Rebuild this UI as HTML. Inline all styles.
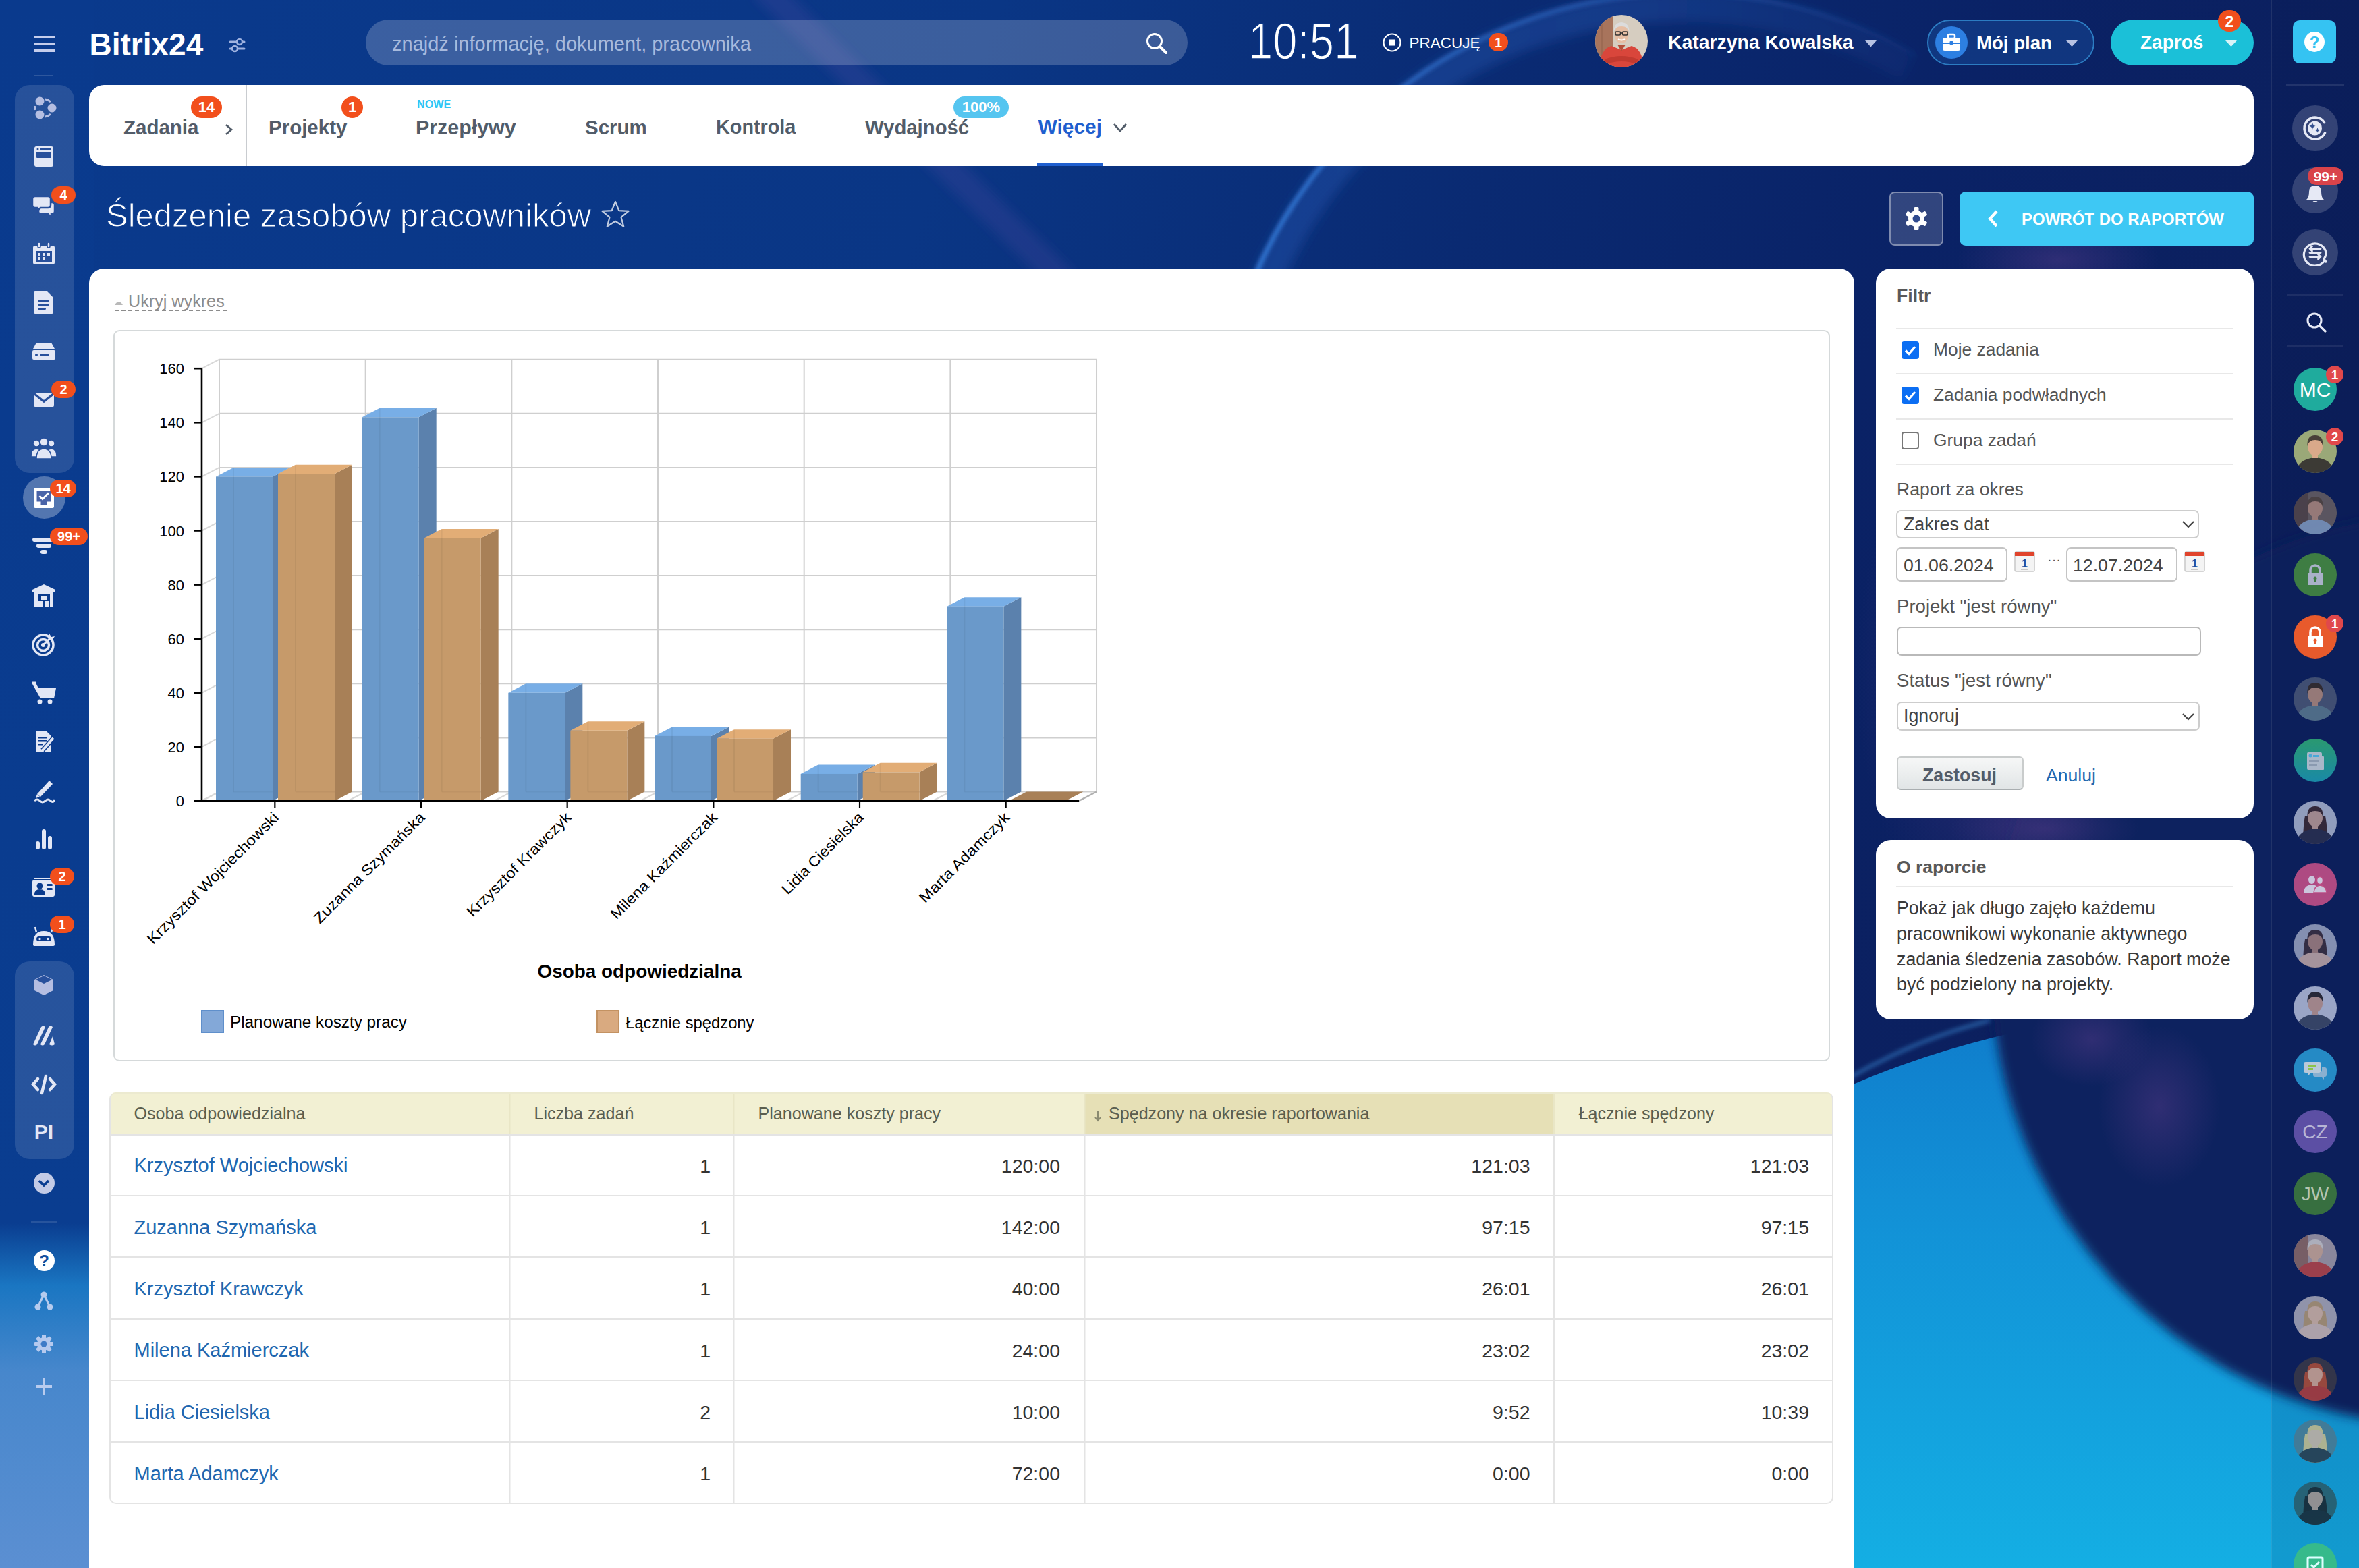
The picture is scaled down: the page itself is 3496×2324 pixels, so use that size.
<!DOCTYPE html>
<html><head><meta charset="utf-8">
<style>
*{box-sizing:border-box;margin:0;padding:0}
html,body{width:3496px;height:2324px;overflow:hidden}
body{position:relative;font-family:"Liberation Sans",sans-serif;background:#0a3488}
svg text{font-family:"Liberation Sans",sans-serif}
.a{position:absolute}
.t{position:absolute;white-space:nowrap;line-height:1}
</style></head>
<body>
<svg class="a" style="left:0;top:0" width="3496" height="2324" viewBox="0 0 3496 2324">
  <defs>
    <linearGradient id="bgbase" x1="0" y1="0" x2="1" y2="0.25">
      <stop offset="0" stop-color="#0a3a8d"/>
      <stop offset="0.4" stop-color="#0a3685"/>
      <stop offset="0.62" stop-color="#0a2a72"/>
      <stop offset="0.8" stop-color="#0a2266"/>
      <stop offset="1" stop-color="#0c1f5c"/>
    </linearGradient>
    <linearGradient id="leftcol" x1="0" y1="0" x2="0" y2="1">
      <stop offset="0" stop-color="#0a3a8d"/>
      <stop offset="0.78" stop-color="#0a3d90"/>
      <stop offset="0.82" stop-color="#1a76c2"/>
      <stop offset="0.875" stop-color="#4787cc"/>
      <stop offset="1" stop-color="#5b8fd2"/>
    </linearGradient>
    <linearGradient id="cyan" x1="0" y1="0" x2="0" y2="1">
      <stop offset="0" stop-color="#0f7ccb"/>
      <stop offset="0.1" stop-color="#1290d6"/>
      <stop offset="0.3" stop-color="#14b0e4"/>
      <stop offset="1" stop-color="#17bfec"/>
    </linearGradient>
    <radialGradient id="purp" cx="0.5" cy="0.5" r="0.5">
      <stop offset="0" stop-color="#5a3c8c" stop-opacity="0.45"/>
      <stop offset="1" stop-color="#5a3c8c" stop-opacity="0"/>
    </radialGradient>
    <radialGradient id="darkc" cx="0.5" cy="0.5" r="0.5">
      <stop offset="0" stop-color="#0b1f62"/>
      <stop offset="0.9" stop-color="#0b2368"/>
      <stop offset="0.97" stop-color="#0d3a86"/>
      <stop offset="1" stop-color="#0f4f9e"/>
    </radialGradient>
    <radialGradient id="hdrarc" cx="0.5" cy="0.5" r="0.5">
      <stop offset="0.9" stop-color="#2a66c0" stop-opacity="0"/>
      <stop offset="0.975" stop-color="#2a66c0" stop-opacity="0.35"/>
      <stop offset="1" stop-color="#3a7ad8" stop-opacity="0.7"/>
    </radialGradient>
    <filter id="blur8"><feGaussianBlur stdDeviation="8"/></filter>
    <filter id="blur3"><feGaussianBlur stdDeviation="3"/></filter>
  </defs>
  <rect width="3496" height="2324" fill="url(#bgbase)"/>
  <rect width="140" height="2324" fill="url(#leftcol)"/>
  <linearGradient id="arcg" gradientUnits="userSpaceOnUse" x1="1850" y1="0" x2="2900" y2="0"><stop offset="0" stop-color="#3a86e6" stop-opacity="0.95"/><stop offset="0.45" stop-color="#3a7ad8" stop-opacity="0.55"/><stop offset="1" stop-color="#3a7ad8" stop-opacity="0"/></linearGradient>
  <linearGradient id="arcg2" gradientUnits="userSpaceOnUse" x1="1800" y1="0" x2="3000" y2="0"><stop offset="0" stop-color="#2a62c0" stop-opacity="0.35"/><stop offset="0.5" stop-color="#2a62c0" stop-opacity="0.3"/><stop offset="1" stop-color="#2a62c0" stop-opacity="0"/></linearGradient>
  <path d="M1847.8 505.8 A669 669 0 0 1 2828.5 99.6" stroke="url(#arcg2)" stroke-width="44" fill="none" filter="url(#blur8)"/>
  <path d="M1828.5 500.7 A689 689 0 0 1 2838.5 82.3" stroke="url(#arcg)" stroke-width="6" fill="none" filter="url(#blur3)"/>
  <path d="M1130 -20 L1580 420" stroke="#5a4aa8" stroke-opacity="0.22" stroke-width="40" filter="url(#blur8)"/>
  <circle cx="3300" cy="2920" r="1425" fill="url(#cyan)"/>
  <path d="M2740 1598 Q2840 1540 2950 1512" stroke="#3b8fd8" stroke-opacity="0.6" stroke-width="5" fill="none" filter="url(#blur3)"/>
  <circle cx="3627" cy="1438" r="676" fill="#0b205f" filter="url(#blur8)"/>
  <ellipse cx="2950" cy="1000" rx="200" ry="380" fill="url(#purp)"/>
  <ellipse cx="3050" cy="385" rx="150" ry="60" fill="url(#purp)"/>
  <ellipse cx="3030" cy="1228" rx="140" ry="50" fill="url(#purp)"/>
  <ellipse cx="3200" cy="1640" rx="90" ry="120" fill="url(#purp)"/>
  <ellipse cx="3100" cy="1540" rx="90" ry="70" fill="url(#purp)"/>
</svg>

<div class="a" style="left:3365px;top:0px;width:131px;height:2324px;background:rgba(6,16,64,0.12)"></div>
<div class="a" style="left:3365px;top:0px;width:2px;height:2324px;background:rgba(255,255,255,0.09)"></div>
<div class="a" style="left:3389px;top:436px;width:84px;height:2px;background:rgba(255,255,255,0.08)"></div>
<div class="a" style="left:3389px;top:512px;width:84px;height:2px;background:rgba(255,255,255,0.08)"></div>
<div class="a" style="left:3397px;top:156px;width:68px;height:68px;background:rgba(255,255,255,0.17);border-radius:50%"></div>
<div class="a" style="left:3397px;top:248px;width:68px;height:68px;background:rgba(255,255,255,0.17);border-radius:50%"></div>
<div class="a" style="left:3397px;top:340px;width:68px;height:68px;background:rgba(255,255,255,0.17);border-radius:50%"></div>
<svg class="a" style="left:3411.0px;top:170.0px;opacity:1" width="40" height="40" viewBox="0 0 40 40"><path d="M33.5 11.5 A16 16 0 1 0 34.5 27" stroke="#e6e9f5" stroke-width="3.6" fill="none" stroke-linecap="round"/><circle cx="19.5" cy="20" r="10.5" fill="#e6e9f5"/><path d="M16 11.5 q0.9 4.6 4.6 5.2 q-3.7 0.8 -4.6 5.4 q-0.9 -4.6 -4.6 -5.4 q3.7 -0.6 4.6 -5.2z" fill="#34508f"/><path d="M23.5 19.5 q0.6 3 3 3.5 q-2.4 0.5 -3 3.6 q-0.6 -3.1 -3 -3.6 q2.4 -0.5 3 -3.5z" fill="#34508f"/></svg>
<svg class="a" style="left:3411.0px;top:262.0px;opacity:1" width="40" height="40" viewBox="0 0 40 40"><path d="M7 34 q4 -3 4 -12 q0 -9 9 -9 q9 0 9 9 q0 9 4 12z" fill="#e6e9f5"/><path d="M16.5 36 h7 q-3.5 4 -7 0z" fill="#e6e9f5"/></svg>
<svg class="a" style="left:3411.0px;top:354.0px;opacity:1" width="40" height="40" viewBox="0 0 40 40"><path d="M34 32 A16.5 16.5 0 1 1 36 20 A16 16 0 0 1 33 30 L36 34z" stroke="#e6e9f5" stroke-width="3.2" fill="none" stroke-linejoin="round"/><g stroke="#e6e9f5" stroke-width="2.8" fill="none" stroke-linecap="round"><path d="M12 14.5 h16 M12 14.5 l3.5 -3.5 M12 14.5 l3.5 3.5"/><path d="M12 20.5 h16"/><path d="M28 26.5 h-16 M28 26.5 l-3.5 -3.5 M28 26.5 l-3.5 3.5"/></g></svg>
<div class="a" style="left:3420px;top:248px;width:53px;height:26px;background:#d9434a;border-radius:13.0px"></div>
<div class="t" style="left:3146.5px;width:600px;text-align:center;top:250.8px;font-size:21px;font-weight:bold;color:#fff;">99+</div>
<svg class="a" style="left:3413.0px;top:458.0px;opacity:1" width="40" height="40" viewBox="0 0 40 40"><circle cx="17" cy="17" r="10" stroke="#e6e9f5" stroke-width="3" fill="none"/><path d="M24 24 L34 34" stroke="#e6e9f5" stroke-width="3.5"/></svg>

<div class="a" style="left:3399px;top:545px;width:64px;height:64px;background:#1fab9d;border-radius:50%;opacity:1.0"></div>
<div class="t" style="left:3131.0px;width:600px;text-align:center;top:562.6px;font-size:30px;color:#fff;">MC</div>
<svg class="a" style="left:3399px;top:636.7px;opacity:1.0" width="64" height="64" viewBox="0 0 64 64"><defs><clipPath id="ca1"><circle cx="32" cy="32" r="32"/></clipPath></defs><g clip-path="url(#ca1)"><rect width="64" height="64" fill="#9aa878"/><path d="M4 64 q1 -20 28 -23 q27 3 28 23z" fill="#3c3a35"/><rect x="28" y="34" width="8" height="8" fill="#d9a98a"/><ellipse cx="32" cy="25" rx="11" ry="13.5" fill="#d9a98a"/><path d="M20.5 24 q-1 -16 11.5 -16 q12.5 0 11.5 16 q-2 -9 -11.5 -9 q-9.5 0 -11.5 9z" fill="#4a4038"/></g></svg>
<svg class="a" style="left:3399px;top:728.4px;opacity:0.8" width="64" height="64" viewBox="0 0 64 64"><defs><clipPath id="ca2"><circle cx="32" cy="32" r="32"/></clipPath></defs><g clip-path="url(#ca2)"><rect width="64" height="64" fill="#6e6462"/><rect width="22" height="64" fill="#5a4a48"/><path d="M4 64 q1 -20 28 -23 q27 3 28 23z" fill="#8aa4c8"/><rect x="28" y="34" width="8" height="8" fill="#b89080"/><ellipse cx="32" cy="25" rx="11" ry="13.5" fill="#b89080"/><path d="M20.5 24 q-1 -16 11.5 -16 q12.5 0 11.5 16 q-2 -9 -11.5 -9 q-9.5 0 -11.5 9z" fill="#5a4a40"/></g></svg>
<div class="a" style="left:3399px;top:820px;width:64px;height:64px;background:#3e7d43;border-radius:50%;opacity:1.0"></div>
<svg class="a" style="left:3411.0px;top:832.1px;opacity:1" width="40" height="40" viewBox="0 0 40 40"><path d="M13 18 v-5 a7 7 0 0 1 14 0 v5" stroke="#a9b1c9" stroke-width="3.5" fill="none"/><rect x="9" y="18" width="22" height="17" fill="#a9b1c9"/><circle cx="20" cy="25" r="2.5" fill="#3e7d43"/><rect x="19" y="26" width="2" height="5" fill="#3e7d43"/></svg>
<div class="a" style="left:3399px;top:912px;width:64px;height:64px;background:#e85a2c;border-radius:50%;opacity:1.0"></div>
<svg class="a" style="left:3411.0px;top:923.8px;opacity:1" width="40" height="40" viewBox="0 0 40 40"><path d="M13 18 v-5 a7 7 0 0 1 14 0 v5" stroke="#fff" stroke-width="3.5" fill="none"/><rect x="9" y="18" width="22" height="17" fill="#fff"/><circle cx="20" cy="25" r="2.5" fill="#e85a2c"/><rect x="19" y="26" width="2" height="5" fill="#e85a2c"/></svg>
<svg class="a" style="left:3399px;top:1003.5px;opacity:0.8" width="64" height="64" viewBox="0 0 64 64"><defs><clipPath id="ca5"><circle cx="32" cy="32" r="32"/></clipPath></defs><g clip-path="url(#ca5)"><rect width="64" height="64" fill="#4e5a78"/><path d="M4 64 q1 -20 28 -23 q27 3 28 23z" fill="#5f7f92"/><rect x="28" y="34" width="8" height="8" fill="#b89080"/><ellipse cx="32" cy="25" rx="11" ry="13.5" fill="#b89080"/><path d="M20.5 24 q-1 -16 11.5 -16 q12.5 0 11.5 16 q-2 -9 -11.5 -9 q-9.5 0 -11.5 9z" fill="#3a2e28"/></g></svg>
<div class="a" style="left:3399px;top:1095px;width:64px;height:64px;border-radius:50%;background:linear-gradient(#2fae74,#1c9cb4);opacity:0.85"></div>
<svg class="a" style="left:3411.0px;top:1107.2px;opacity:1" width="40" height="40" viewBox="0 0 40 40"><rect x="8" y="8" width="22" height="26" rx="2" fill="#a9b7c9"/><rect x="28" y="14" width="5" height="20" rx="1" fill="#a9b7c9"/><circle cx="13" cy="13" r="2.5" fill="#4aa8d8"/><rect x="17" y="12" width="9" height="3" fill="#4aa8d8"/><rect x="11" y="20" width="15" height="2.5" fill="#8a9ab0"/><rect x="11" y="26" width="12" height="2.5" fill="#8a9ab0"/></svg>
<svg class="a" style="left:3399px;top:1186.9px;opacity:0.85" width="64" height="64" viewBox="0 0 64 64"><defs><clipPath id="ca7"><circle cx="32" cy="32" r="32"/></clipPath></defs><g clip-path="url(#ca7)"><rect width="64" height="64" fill="#a9b3cf"/><path d="M17 22 q-5 26 0 42 h30 q5 -16 0 -42z" fill="#3a2a35"/><path d="M4 64 q1 -20 28 -23 q27 3 28 23z" fill="#2a3050"/><rect x="28" y="34" width="8" height="8" fill="#b89a98"/><ellipse cx="32" cy="25" rx="11" ry="13.5" fill="#b89a98"/><path d="M20.5 24 q-1 -16 11.5 -16 q12.5 0 11.5 16 q-2 -9 -11.5 -9 q-9.5 0 -11.5 9z" fill="#3a2a35"/></g></svg>
<div class="a" style="left:3399px;top:1279px;width:64px;height:64px;background:#c04f86;border-radius:50%;opacity:0.9"></div>
<svg class="a" style="left:3411.0px;top:1290.6px;opacity:1" width="40" height="40" viewBox="0 0 40 40"><g fill="#cbc6dc"><ellipse cx="15" cy="13" rx="5" ry="6"/><path d="M3 33 q0 -12 12 -13 q12 1 12 13z"/><ellipse cx="27" cy="14" rx="4.5" ry="5.5" stroke="#c04f86" stroke-width="1.5"/><path d="M18 32 q1 -10 9 -11 q9 1 10 11z" stroke="#c04f86" stroke-width="1.5"/></g></svg>
<svg class="a" style="left:3399px;top:1370.3000000000002px;opacity:0.85" width="64" height="64" viewBox="0 0 64 64"><defs><clipPath id="ca9"><circle cx="32" cy="32" r="32"/></clipPath></defs><g clip-path="url(#ca9)"><rect width="64" height="64" fill="#9aa3c0"/><path d="M17 22 q-5 26 0 42 h30 q5 -16 0 -42z" fill="#3a3040"/><path d="M4 64 q1 -20 28 -23 q27 3 28 23z" fill="#c0a8a8"/><rect x="28" y="34" width="8" height="8" fill="#a08080"/><ellipse cx="32" cy="25" rx="11" ry="13.5" fill="#a08080"/><path d="M20.5 24 q-1 -16 11.5 -16 q12.5 0 11.5 16 q-2 -9 -11.5 -9 q-9.5 0 -11.5 9z" fill="#3a3040"/></g></svg>
<svg class="a" style="left:3399px;top:1462.0px;opacity:0.9" width="64" height="64" viewBox="0 0 64 64"><defs><clipPath id="ca10"><circle cx="32" cy="32" r="32"/></clipPath></defs><g clip-path="url(#ca10)"><rect width="64" height="64" fill="#aab4d2"/><path d="M4 64 q1 -20 28 -23 q27 3 28 23z" fill="#3a4868"/><rect x="28" y="34" width="8" height="8" fill="#b09090"/><ellipse cx="32" cy="25" rx="11" ry="13.5" fill="#b09090"/><path d="M20.5 24 q-1 -16 11.5 -16 q12.5 0 11.5 16 q-2 -9 -11.5 -9 q-9.5 0 -11.5 9z" fill="#2a2a35"/></g></svg>
<div class="a" style="left:3399px;top:1554px;width:64px;height:64px;background:#2a9ed8;border-radius:50%;opacity:0.85"></div>
<svg class="a" style="left:3411.0px;top:1565.7px;opacity:1" width="40" height="40" viewBox="0 0 40 40"><path d="M6 8 h20 a3 3 0 0 1 3 3 v10 a3 3 0 0 1 -3 3 h-12 l-5 5 v-5 h-3 a3 3 0 0 1 -3 -3 v-10 a3 3 0 0 1 3 -3z" fill="#b9c9d9"/><path d="M30 16 h4 a3 3 0 0 1 3 3 v8 a3 3 0 0 1 -3 3 h-1 v4 l-4 -4 h-9 a3 3 0 0 1 -3 -3 v-2 h8 a5 5 0 0 0 5 -5z" fill="#8ab0d0"/><rect x="9" y="12" width="12" height="3" fill="#8bc34a"/><rect x="9" y="17" width="8" height="3" fill="#8bc34a"/></svg>
<div class="a" style="left:3399px;top:1645px;width:64px;height:64px;background:#6b58b2;border-radius:50%;opacity:0.85"></div>
<div class="t" style="left:3131.0px;width:600px;text-align:center;top:1664.2px;font-size:28px;color:#b8b5d5;">CZ</div>
<div class="a" style="left:3399px;top:1737px;width:64px;height:64px;background:#3f7e3c;border-radius:50%;opacity:0.85"></div>
<div class="t" style="left:3131.0px;width:600px;text-align:center;top:1755.9px;font-size:28px;color:#b5c5b2;">JW</div>
<svg class="a" style="left:3399px;top:1828.8px;opacity:0.85" width="64" height="64" viewBox="0 0 64 64"><defs><clipPath id="ca14"><circle cx="32" cy="32" r="32"/></clipPath></defs><g clip-path="url(#ca14)"><rect width="64" height="64" fill="#a09aa8"/><rect width="22" height="64" fill="#8a6a68"/><path d="M4 64 q1 -20 28 -23 q27 3 28 23z" fill="#b5454a"/><rect x="28" y="34" width="8" height="8" fill="#c9a89a"/><ellipse cx="32" cy="25" rx="11" ry="13.5" fill="#c9a89a"/><path d="M20.5 24 q-1 -16 11.5 -16 q12.5 0 11.5 16 q-2 -9 -11.5 -9 q-9.5 0 -11.5 9z" fill="#c8c8cc"/></g></svg>
<svg class="a" style="left:3399px;top:1920.5px;opacity:0.85" width="64" height="64" viewBox="0 0 64 64"><defs><clipPath id="ca15"><circle cx="32" cy="32" r="32"/></clipPath></defs><g clip-path="url(#ca15)"><rect width="64" height="64" fill="#a8a8b8"/><path d="M17 22 q-5 26 0 42 h30 q5 -16 0 -42z" fill="#b09878"/><path d="M4 64 q1 -20 28 -23 q27 3 28 23z" fill="#c8b8b8"/><rect x="28" y="34" width="8" height="8" fill="#d0b5a8"/><ellipse cx="32" cy="25" rx="11" ry="13.5" fill="#d0b5a8"/><path d="M20.5 24 q-1 -16 11.5 -16 q12.5 0 11.5 16 q-2 -9 -11.5 -9 q-9.5 0 -11.5 9z" fill="#b09878"/></g></svg>
<svg class="a" style="left:3399px;top:2012.2px;opacity:0.85" width="64" height="64" viewBox="0 0 64 64"><defs><clipPath id="ca16"><circle cx="32" cy="32" r="32"/></clipPath></defs><g clip-path="url(#ca16)"><rect width="64" height="64" fill="#3a3a48"/><path d="M17 22 q-5 26 0 42 h30 q5 -16 0 -42z" fill="#b0503a"/><path d="M4 64 q1 -20 28 -23 q27 3 28 23z" fill="#b04040"/><rect x="28" y="34" width="8" height="8" fill="#d0a898"/><ellipse cx="32" cy="25" rx="11" ry="13.5" fill="#d0a898"/><path d="M20.5 24 q-1 -16 11.5 -16 q12.5 0 11.5 16 q-2 -9 -11.5 -9 q-9.5 0 -11.5 9z" fill="#b0503a"/></g></svg>
<svg class="a" style="left:3399px;top:2103.9px;opacity:0.85" width="64" height="64" viewBox="0 0 64 64"><defs><clipPath id="ca17"><circle cx="32" cy="32" r="32"/></clipPath></defs><g clip-path="url(#ca17)"><rect width="64" height="64" fill="#4a7890"/><path d="M17 22 q-5 26 0 42 h30 q5 -16 0 -42z" fill="#c8b888"/><path d="M4 64 q1 -20 28 -23 q27 3 28 23z" fill="#2a3848"/><rect x="28" y="34" width="8" height="8" fill="#c8b0a0"/><ellipse cx="32" cy="25" rx="11" ry="13.5" fill="#c8b0a0"/><path d="M20.5 24 q-1 -16 11.5 -16 q12.5 0 11.5 16 q-2 -9 -11.5 -9 q-9.5 0 -11.5 9z" fill="#c8b888"/></g></svg>
<svg class="a" style="left:3399px;top:2195.6000000000004px;opacity:0.85" width="64" height="64" viewBox="0 0 64 64"><defs><clipPath id="ca18"><circle cx="32" cy="32" r="32"/></clipPath></defs><g clip-path="url(#ca18)"><rect width="64" height="64" fill="#2a5a68"/><path d="M17 22 q-5 26 0 42 h30 q5 -16 0 -42z" fill="#1a2028"/><path d="M4 64 q1 -20 28 -23 q27 3 28 23z" fill="#1a2530"/><rect x="28" y="34" width="8" height="8" fill="#a89088"/><ellipse cx="32" cy="25" rx="11" ry="13.5" fill="#a89088"/><path d="M20.5 24 q-1 -16 11.5 -16 q12.5 0 11.5 16 q-2 -9 -11.5 -9 q-9.5 0 -11.5 9z" fill="#1a2028"/></g></svg>
<div class="a" style="left:3399px;top:2287px;width:64px;height:64px;background:#3dbf7f;border-radius:50%;opacity:0.85"></div>
<svg class="a" style="left:3411.0px;top:2299.3px;opacity:1" width="40" height="40" viewBox="0 0 40 40"><rect x="9" y="9" width="22" height="22" rx="2" stroke="#dff" stroke-width="3" fill="none"/><path d="M14 20 l4 4 l8 -8" stroke="#dff" stroke-width="3" fill="none"/></svg>
<div class="a" style="left:3447px;top:542px;width:26px;height:26px;background:#e0484b;border-radius:13.0px"></div>
<div class="t" style="left:3160.0px;width:600px;text-align:center;top:545.8px;font-size:19px;font-weight:bold;color:#fff;">1</div>
<div class="a" style="left:3447px;top:634px;width:26px;height:26px;background:#e0484b;border-radius:13.0px"></div>
<div class="t" style="left:3160.0px;width:600px;text-align:center;top:637.8px;font-size:19px;font-weight:bold;color:#fff;">2</div>
<div class="a" style="left:3447px;top:911px;width:26px;height:26px;background:#e0484b;border-radius:13.0px"></div>
<div class="t" style="left:3160.0px;width:600px;text-align:center;top:914.8px;font-size:19px;font-weight:bold;color:#fff;">1</div>

<div class="a" style="left:50px;top:53px;width:32px;height:4px;background:#c5cdec;border-radius:1px"></div>
<div class="a" style="left:50px;top:63px;width:32px;height:4px;background:#c5cdec;border-radius:1px"></div>
<div class="a" style="left:50px;top:73px;width:32px;height:4px;background:#c5cdec;border-radius:1px"></div>
<div class="a" style="left:50px;top:111px;width:28px;height:2px;background:rgba(255,255,255,0.15)"></div>
<div class="t" style="left:132.5px;top:42.5px;font-size:46px;font-weight:bold;color:#fff;">Bitrix24</div>
<svg class="a" style="left:338px;top:54px" width="28" height="26" viewBox="0 0 28 26">
<g stroke="#9fb2e0" stroke-width="3" fill="none" stroke-linecap="round">
<line x1="3" y1="8" x2="24" y2="8"/><line x1="3" y1="18" x2="24" y2="18"/></g>
<circle cx="17" cy="8" r="4" fill="#0a3a8d" stroke="#9fb2e0" stroke-width="2.5"/>
<circle cx="10" cy="18" r="4" fill="#0a3a8d" stroke="#9fb2e0" stroke-width="2.5"/></svg>
<div class="a" style="left:542px;top:29px;width:1218px;height:68px;background:rgba(255,255,255,0.2);border-radius:34px"></div>
<div class="t" style="left:581.0px;top:51.0px;font-size:29px;color:rgba(210,222,245,0.72);">znajdź informację, dokument, pracownika</div>
<svg class="a" style="left:1696px;top:46px" width="40" height="38" viewBox="0 0 40 38">
<circle cx="15" cy="15" r="10.5" stroke="#fff" stroke-width="3" fill="none"/>
<line x1="23" y1="23" x2="32" y2="32" stroke="#fff" stroke-width="4" stroke-linecap="round"/></svg>
<div class="t" style="left:1850.0px;top:23.3px;font-size:76px;color:#fff;transform:scaleX(0.858);transform-origin:0 0;-webkit-text-stroke:1.6px #0a3585">10:51</div>
<svg class="a" style="left:2048px;top:48px" width="30" height="30" viewBox="0 0 30 30">
<circle cx="15" cy="15" r="12.5" stroke="#fff" stroke-width="2.2" fill="none"/>
<rect x="10.5" y="10.5" width="9" height="9" fill="#fff"/></svg>
<div class="t" style="left:2088.5px;top:53.2px;font-size:22.5px;color:#fff;">PRACUJĘ</div>
<div class="a" style="left:2206px;top:49px;width:29px;height:27px;background:#f24f1c;border-radius:13.5px"></div>
<div class="t" style="left:1920.5px;width:600px;text-align:center;top:52.8px;font-size:20px;font-weight:bold;color:#fff;">1</div>
<svg class="a" style="left:2364px;top:22px" width="78" height="78" viewBox="0 0 78 78">
<defs><clipPath id="avc"><circle cx="39" cy="39" r="39"/></clipPath></defs>
<g clip-path="url(#avc)"><rect width="78" height="78" fill="#d6cdc0"/><rect width="26" height="78" fill="#a8745c"/><rect x="8" y="0" width="3" height="78" fill="#8f604a" opacity="0.5"/>
<path d="M6 78 Q8 50 24 46 L39 52 L54 46 Q70 50 72 78 Z" fill="#d9463b"/>
<path d="M14 66 Q39 56 64 66 L64 74 Q39 64 14 74Z" fill="#c23a30"/>
<path d="M33 44 L39 54 L45 44z" fill="#b5503a"/>
<ellipse cx="39" cy="29" rx="10.5" ry="13" fill="#e6bea4"/>
<path d="M27.5 26 Q27 12 39 11 Q51 12 50.5 26 Q49 17 39 17 Q29 17 27.5 26Z" fill="#dcdcdc"/>
<g stroke="#333" stroke-width="1.6" fill="none"><rect x="30" y="25" width="7.5" height="5" rx="1.5"/><rect x="40.5" y="25" width="7.5" height="5" rx="1.5"/><path d="M37.5 27 h3"/></g>
<path d="M34 36 q5 3 10 0" stroke="#fff" stroke-width="1.8" fill="none"/>
</g></svg>
<div class="t" style="left:2472.0px;top:47.7px;font-size:28.4px;font-weight:bold;color:#fff;">Katarzyna Kowalska</div>
<svg class="a" style="left:2764px;top:60px" width="17" height="10" viewBox="0 0 17 10"><path d="M0 0 L17 0 L8.5 9.5Z" fill="#b8c3e3"/></svg>
<div class="a" style="left:2856px;top:29px;width:248px;height:68px;border:2px solid #2c7cc2;background:rgba(24,80,160,0.45);border-radius:34px"></div>
<div class="a" style="left:2868px;top:39px;width:48px;height:48px;background:#2d7fe2;border-radius:50%"></div>
<svg class="a" style="left:2877px;top:48px" width="30" height="30" viewBox="0 0 30 30">
<rect x="10" y="3" width="10" height="6" rx="2" stroke="#fff" stroke-width="2.5" fill="none"/>
<rect x="2" y="8" width="26" height="19" rx="3" fill="#fff"/>
<rect x="2" y="15" width="26" height="2" fill="#2d7fe2"/><rect x="12.5" y="13" width="5" height="5" rx="1" fill="#2d7fe2"/></svg>
<div class="t" style="left:2929.0px;top:49.5px;font-size:27.6px;font-weight:bold;color:#fff;">Mój plan</div>
<svg class="a" style="left:3062px;top:60px" width="17" height="10" viewBox="0 0 17 10"><path d="M0 0 L17 0 L8.5 9Z" fill="#b8c3e3"/></svg>
<div class="a" style="left:3128px;top:29px;width:212px;height:68px;background:#1bc0d8;border-radius:34px"></div>
<div class="t" style="left:3172.0px;top:49.2px;font-size:28px;font-weight:bold;color:#fff;">Zaproś</div>
<svg class="a" style="left:3298px;top:60px" width="17" height="10" viewBox="0 0 17 10"><path d="M0 0 L17 0 L8.5 9Z" fill="#d8f4f8"/></svg>
<div class="a" style="left:3287px;top:15px;width:34px;height:32px;background:#f24f1c;border-radius:16.0px"></div>
<div class="t" style="left:3004.0px;width:600px;text-align:center;top:20.5px;font-size:23px;font-weight:bold;color:#fff;">2</div>
<div class="a" style="left:3398px;top:30px;width:64px;height:64px;background:#35c3f2;border-radius:10px"></div>
<div class="a" style="left:3415px;top:47px;width:30px;height:30px;background:#fff;border-radius:50%"></div>
<div class="t" style="left:3130.0px;width:600px;text-align:center;top:50.7px;font-size:24px;font-weight:bold;color:#35c3f2;">?</div>
<div class="a" style="left:3388px;top:125px;width:86px;height:2px;background:rgba(255,255,255,0.1)"></div>

<div class="a" style="left:22px;top:126px;width:88px;height:575px;background:rgba(255,255,255,0.12);border-radius:22px"></div>
<div class="a" style="left:22px;top:1425px;width:88px;height:293px;background:rgba(255,255,255,0.12);border-radius:22px"></div>
<svg class="a" style="left:45.0px;top:140.0px;opacity:1" width="40" height="40" viewBox="0 0 40 40"><g fill="#b5bee2"><circle cx="14" cy="10" r="6.5"/><circle cx="32" cy="20" r="6.5"/><circle cx="14" cy="30" r="6.5"/></g><path d="M22 7 A14 14 0 0 1 30 11 M30 29 A14 14 0 0 1 22 33 M7 17 A14 14 0 0 0 7 23" stroke="#b5bee2" stroke-width="3" fill="none"/></svg>
<svg class="a" style="left:45.0px;top:212.0px;opacity:1" width="40" height="40" viewBox="0 0 40 40"><rect x="6" y="5" width="28" height="30" rx="3" fill="#e3e7f5"/><rect x="9" y="13" width="22" height="9" rx="1" fill="#28509c"/><circle cx="11" cy="9" r="1.5" fill="#28509c"/><rect x="14" y="8" width="16" height="2" fill="#28509c"/></svg>
<svg class="a" style="left:45.0px;top:286.0px;opacity:1" width="40" height="40" viewBox="0 0 40 40"><path d="M12 14 h20 a4 4 0 0 1 4 4 v9 a4 4 0 0 1 -4 4 h-1 l0 5 l-5 -5 h-10 a4 4 0 0 1 -4 -4 v-9 a4 4 0 0 1 4 -4z" fill="#e3e7f5" stroke="#28509c" stroke-width="2.5"/><path d="M7 5 h19 a4 4 0 0 1 4 4 v9 a4 4 0 0 1 -4 4 h-11 l-5 5 v-5 h-3 a4 4 0 0 1 -4 -4 v-9 a4 4 0 0 1 4 -4z" fill="#e3e7f5" stroke="#28509c" stroke-width="2.5"/></svg>
<svg class="a" style="left:45.0px;top:356.0px;opacity:1" width="40" height="40" viewBox="0 0 40 40"><rect x="4" y="8" width="32" height="28" rx="3" fill="#e3e7f5"/><rect x="8" y="16" width="24" height="16" fill="#28509c"/><rect x="11" y="3" width="4" height="8" rx="2" fill="#e3e7f5" stroke="#28509c" stroke-width="1.5"/><rect x="25" y="3" width="4" height="8" rx="2" fill="#e3e7f5" stroke="#28509c" stroke-width="1.5"/><g fill="#e3e7f5"><rect x="11" y="19" width="4" height="4"/><rect x="18" y="19" width="4" height="4"/><rect x="25" y="19" width="4" height="4"/><rect x="11" y="25" width="4" height="4"/><rect x="18" y="25" width="4" height="4"/></g></svg>
<svg class="a" style="left:45.0px;top:429.0px;opacity:1" width="40" height="40" viewBox="0 0 40 40"><path d="M7 3 h18 l9 9 v22 a2 2 0 0 1 -2 2 h-25 a2 2 0 0 1 -2 -2 v-29 a2 2 0 0 1 2 -2z" fill="#e3e7f5"/><g fill="#28509c"><rect x="11" y="15" width="17" height="3" rx="1.5"/><rect x="11" y="21" width="17" height="3" rx="1.5"/><rect x="11" y="27" width="12" height="3" rx="1.5"/></g></svg>
<svg class="a" style="left:45.0px;top:501.0px;opacity:1" width="40" height="40" viewBox="0 0 40 40"><path d="M9 7 h22 l5 9 h-32z" fill="#e3e7f5"/><rect x="3" y="18" width="34" height="14" rx="2" fill="#e3e7f5"/><circle cx="9" cy="25" r="2" fill="#28509c"/><rect x="14" y="23" width="14" height="4" rx="2" fill="#28509c"/></svg>
<svg class="a" style="left:45.0px;top:572.0px;opacity:1" width="40" height="40" viewBox="0 0 40 40"><rect x="5" y="10" width="30" height="21" rx="2" fill="#e3e7f5"/><path d="M5 11 L20 23 L35 11" stroke="#28509c" stroke-width="3.5" fill="none"/></svg>
<svg class="a" style="left:45.0px;top:644.0px;opacity:1" width="40" height="40" viewBox="0 0 40 40"><g fill="#e3e7f5" stroke="#28509c" stroke-width="1.5"><circle cx="9" cy="13" r="5"/><path d="M1 33 q0 -12 8 -12 q8 0 8 12z"/><circle cx="31" cy="13" r="5"/><path d="M23 33 q0 -12 8 -12 q8 0 8 12z"/><circle cx="20" cy="11" r="6"/><path d="M9 36 q0 -15 11 -15 q11 0 11 15z"/></g></svg>
<div class="a" style="left:34px;top:706px;width:63px;height:63px;background:rgba(255,255,255,0.3);border-radius:50%"></div>
<svg class="a" style="left:45.0px;top:718.0px;opacity:1" width="40" height="40" viewBox="0 0 40 40"><rect x="5" y="5" width="30" height="30" rx="2.5" fill="#fff"/><path d="M9.5 9.5 h21 v16 h-6 v5 h-9 v-5 h-6z" fill="#4a64a8"/><path d="M13.5 17 l4.5 4.5 l9 -9" stroke="#fff" stroke-width="3" fill="none"/></svg>
<svg class="a" style="left:45.0px;top:788.0px;opacity:1" width="40" height="40" viewBox="0 0 40 40"><rect x="3" y="9" width="34" height="6" rx="3" fill="#e3e7f5"/><rect x="9" y="18" width="22" height="6" rx="3" fill="#e3e7f5"/><rect x="15" y="27" width="10" height="6" rx="3" fill="#e3e7f5"/></svg>
<svg class="a" style="left:45.0px;top:863.0px;opacity:1" width="40" height="40" viewBox="0 0 40 40"><path d="M20 3 L37 11 V14 h-3 V36 H6 V14 H3 V11z" fill="#e3e7f5"/><g fill="#0a3a8d"><rect x="11" y="17" width="18" height="19"/></g><g fill="#e3e7f5"><rect x="16" y="20" width="8" height="7"/><rect x="12" y="28" width="7" height="8"/><rect x="21" y="28" width="7" height="8"/></g></svg>
<svg class="a" style="left:45.0px;top:935.0px;opacity:1" width="40" height="40" viewBox="0 0 40 40"><g stroke="#e3e7f5" fill="none"><circle cx="19" cy="21" r="15" stroke-width="3.5"/><circle cx="19" cy="21" r="8.5" stroke-width="3.5"/></g><circle cx="19" cy="21" r="3" fill="#e3e7f5"/><path d="M19 21 L31 9" stroke="#e3e7f5" stroke-width="3"/><path d="M28 4 L31 9 L36 8 L33 13 L27 12z" fill="#e3e7f5"/></svg>
<svg class="a" style="left:45.0px;top:1006.0px;opacity:1" width="40" height="40" viewBox="0 0 40 40"><path d="M2 6 h6 l4 8 h26 l-3 15 h-20z" fill="#e3e7f5"/><path d="M2 6 h6" stroke="#e3e7f5" stroke-width="3"/><circle cx="14" cy="34" r="3.5" fill="#e3e7f5"/><circle cx="29" cy="34" r="3.5" fill="#e3e7f5"/></svg>
<svg class="a" style="left:45.0px;top:1080.0px;opacity:1" width="40" height="40" viewBox="0 0 40 40"><path d="M8 4 h16 l6 6 v24 h-22z" fill="#e3e7f5"/><g fill="#0a3a8d"><rect x="11" y="12" width="13" height="2.5"/><rect x="11" y="17" width="13" height="2.5"/><rect x="11" y="22" width="8" height="2.5"/></g><path d="M18 32 L34 14" stroke="#0a3a8d" stroke-width="7"/><path d="M18 32 L34 14" stroke="#e3e7f5" stroke-width="4"/><path d="M16 35 l1 -5 l3 3z" fill="#e3e7f5"/></svg>
<svg class="a" style="left:45.0px;top:1151.0px;opacity:1" width="40" height="40" viewBox="0 0 40 40"><path d="M10 26 L28 6 L33 11 L15 30z" fill="#e3e7f5"/><path d="M8 32 l2 -6 l4 4z" fill="#e3e7f5"/><path d="M6 36 q4 -4 8 0 t8 0 t8 0 t6 -2" stroke="#e3e7f5" stroke-width="3" fill="none"/></svg>
<svg class="a" style="left:45.0px;top:1223.0px;opacity:1" width="40" height="40" viewBox="0 0 40 40"><g fill="#e3e7f5"><rect x="8" y="24" width="6" height="12" rx="3"/><rect x="17" y="6" width="6" height="30" rx="3"/><rect x="26" y="16" width="6" height="20" rx="3"/></g></svg>
<svg class="a" style="left:45.0px;top:1294.0px;opacity:1" width="40" height="40" viewBox="0 0 40 40"><rect x="3" y="10" width="33" height="25" rx="3" fill="#e3e7f5"/><rect x="6" y="7" width="27" height="2" fill="#e3e7f5"/><circle cx="14" cy="19" r="4.5" fill="#0a3a8d"/><path d="M6 32 q0 -8 8 -8 q8 0 8 8z" fill="#0a3a8d"/><rect x="24" y="16" width="9" height="3" rx="1.5" fill="#0a3a8d"/><rect x="24" y="22" width="9" height="3" rx="1.5" fill="#0a3a8d"/></svg>
<svg class="a" style="left:45.0px;top:1366.0px;opacity:1" width="40" height="40" viewBox="0 0 40 40"><path d="M4 34 q0 -20 16 -20 q16 0 16 20 q0 2 -2 2 h-28 q-2 0 -2 -2z" fill="#e3e7f5"/><path d="M9 16 L7 8 M31 16 L33 8" stroke="#e3e7f5" stroke-width="2.5"/><rect x="9" y="22" width="22" height="7" rx="3.5" fill="#0a3a8d"/><circle cx="14" cy="25.5" r="1.8" fill="#e3e7f5"/><circle cx="26" cy="25.5" r="1.8" fill="#e3e7f5"/></svg>
<svg class="a" style="left:45.0px;top:1440.0px;opacity:1" width="40" height="40" viewBox="0 0 40 40"><path d="M20 5 L34 12 V28 L20 35 L6 28 V12z" fill="#b5bee2"/><path d="M20 6 L32 12 L20 18 L8 12z" fill="#28509c"/></svg>
<svg class="a" style="left:45.0px;top:1514.0px;opacity:1" width="40" height="40" viewBox="0 0 40 40"><g fill="#e3e7f5"><path d="M4 34 L16 8 q3 -3 6 0 L10 34 q-3 3 -6 0z"/><path d="M15 34 L27 8 q3 -3 6 0 L21 34 q-3 3 -6 0z"/><path d="M28 34 L33 22 L36 34 q-4 3 -8 0z"/></g></svg>
<svg class="a" style="left:45.0px;top:1587.0px;opacity:1" width="40" height="40" viewBox="0 0 40 40"><g stroke="#e3e7f5" stroke-width="4.5" fill="none" stroke-linecap="round"><path d="M11 12 L4 20 L11 28"/><path d="M29 12 L36 20 L29 28"/><path d="M23 8 L17 33"/></g></svg>
<div class="t" style="left:-235.0px;width:600px;text-align:center;top:1662.6px;font-size:30px;font-weight:bold;color:#e3e7f5;">PI</div>
<div class="a" style="left:50px;top:1738px;width:31px;height:31px;background:#c3cbe6;border-radius:50%"></div>
<svg class="a" style="left:45.0px;top:1733.0px;opacity:1" width="40" height="40" viewBox="0 0 40 40"><path d="M13 17 L20 24 L27 17" stroke="#0a3d90" stroke-width="3.5" fill="none"/></svg>
<div class="a" style="left:46px;top:1810px;width:39px;height:2px;background:rgba(255,255,255,0.12)"></div>
<div class="a" style="left:50px;top:1853px;width:31px;height:31px;background:#fff;border-radius:50%"></div>
<div class="t" style="left:-234.5px;width:600px;text-align:center;top:1856.7px;font-size:24px;font-weight:bold;color:#0f4f9f;">?</div>
<svg class="a" style="left:45.0px;top:1909.0px;opacity:1" width="40" height="40" viewBox="0 0 40 40"><g fill="#b6cbee"><circle cx="20" cy="10" r="4.5"/><circle cx="11" cy="28" r="4.5"/><circle cx="29" cy="28" r="4.5"/></g><path d="M20 10 L11 28 M20 10 L29 28" stroke="#b6cbee" stroke-width="3"/></svg>
<svg class="a" style="left:45.0px;top:1972.0px;opacity:1" width="40" height="40" viewBox="0 0 40 40"><g fill="#b5c9ee" transform="translate(20 20)"><circle r="10"/><rect x="-3" y="-14" width="6" height="7" rx="1" transform="rotate(0)"/><rect x="-3" y="-14" width="6" height="7" rx="1" transform="rotate(45)"/><rect x="-3" y="-14" width="6" height="7" rx="1" transform="rotate(90)"/><rect x="-3" y="-14" width="6" height="7" rx="1" transform="rotate(135)"/><rect x="-3" y="-14" width="6" height="7" rx="1" transform="rotate(180)"/><rect x="-3" y="-14" width="6" height="7" rx="1" transform="rotate(225)"/><rect x="-3" y="-14" width="6" height="7" rx="1" transform="rotate(270)"/><rect x="-3" y="-14" width="6" height="7" rx="1" transform="rotate(315)"/></g><circle cx="20" cy="20" r="4.5" fill="#3f7bc7"/></svg>
<svg class="a" style="left:45.0px;top:2035.0px;opacity:1" width="40" height="40" viewBox="0 0 40 40"><path d="M20 8 V32 M8 20 H32" stroke="#b8cbee" stroke-width="4"/></svg>
<div class="a" style="left:76px;top:276px;width:36px;height:26px;background:#f24f1c;border-radius:13.0px"></div>
<div class="t" style="left:-206.0px;width:600px;text-align:center;top:279.3px;font-size:20px;font-weight:bold;color:#fff;">4</div>
<div class="a" style="left:76px;top:564px;width:36px;height:26px;background:#f24f1c;border-radius:13.0px"></div>
<div class="t" style="left:-206.0px;width:600px;text-align:center;top:567.3px;font-size:20px;font-weight:bold;color:#fff;">2</div>
<div class="a" style="left:74px;top:711px;width:39px;height:26px;background:#f24f1c;border-radius:13.0px"></div>
<div class="t" style="left:-206.5px;width:600px;text-align:center;top:714.3px;font-size:20px;font-weight:bold;color:#fff;">14</div>
<div class="a" style="left:74px;top:782px;width:56px;height:26px;background:#f24f1c;border-radius:13.0px"></div>
<div class="t" style="left:-198.0px;width:600px;text-align:center;top:785.3px;font-size:20px;font-weight:bold;color:#fff;">99+</div>
<div class="a" style="left:74px;top:1286px;width:36px;height:26px;background:#f24f1c;border-radius:13.0px"></div>
<div class="t" style="left:-208.0px;width:600px;text-align:center;top:1289.3px;font-size:20px;font-weight:bold;color:#fff;">2</div>
<div class="a" style="left:74px;top:1357px;width:36px;height:26px;background:#f24f1c;border-radius:13.0px"></div>
<div class="t" style="left:-208.0px;width:600px;text-align:center;top:1360.3px;font-size:20px;font-weight:bold;color:#fff;">1</div>

<div class="a" style="left:132px;top:126px;width:3208px;height:120px;background:#fff;border-radius:22px"></div>
<div class="t" style="left:183.0px;top:173.5px;font-size:29.5px;font-weight:bold;color:#525c69;">Zadania</div>
<div class="a" style="left:283px;top:143px;width:46px;height:32px;background:#f24f1c;border-radius:16.0px"></div>
<div class="t" style="left:6.0px;width:600px;text-align:center;top:148.3px;font-size:22px;font-weight:bold;color:#fff;">14</div>
<svg class="a" style="left:331px;top:182px" width="18" height="20" viewBox="0 0 18 20"><path d="M4 3 L12 10 L4 17" stroke="#525c69" stroke-width="2.8" fill="none"/></svg>
<div class="a" style="left:364px;top:126px;width:2px;height:120px;background:#c9ccd0"></div>
<div class="t" style="left:398.0px;top:173.7px;font-size:29.5px;font-weight:bold;color:#525c69;">Projekty</div>
<div class="a" style="left:506px;top:143px;width:32px;height:32px;background:#f24f1c;border-radius:16.0px"></div>
<div class="t" style="left:222.0px;width:600px;text-align:center;top:148.3px;font-size:22px;font-weight:bold;color:#fff;">1</div>
<div class="t" style="left:618.0px;top:146.3px;font-size:16.2px;font-weight:bold;color:#2fc6f6;">NOWE</div>
<div class="t" style="left:616.0px;top:173.0px;font-size:30.4px;font-weight:bold;color:#525c69;">Przepływy</div>
<div class="t" style="left:867.0px;top:173.7px;font-size:29.5px;font-weight:bold;color:#525c69;">Scrum</div>
<div class="t" style="left:1061.0px;top:174.3px;font-size:28.8px;font-weight:bold;color:#525c69;">Kontrola</div>
<div class="t" style="left:1282.0px;top:173.9px;font-size:29.3px;font-weight:bold;color:#525c69;">Wydajność</div>
<div class="a" style="left:1413px;top:143px;width:82px;height:32px;background:#55c5f0;border-radius:16.0px"></div>
<div class="t" style="left:1154.0px;width:600px;text-align:center;top:148.3px;font-size:22px;font-weight:bold;color:#fff;">100%</div>
<div class="t" style="left:1538.5px;top:173.4px;font-size:29.9px;font-weight:bold;color:#1f5fcf;">Więcej</div>
<svg class="a" style="left:1648px;top:180px" width="24" height="18" viewBox="0 0 24 18"><path d="M3 4 L12 14 L21 4" stroke="#525c69" stroke-width="2.8" fill="none"/></svg>
<div class="a" style="left:1537px;top:241px;width:97px;height:5px;background:#1f5fcf"></div>
<div class="t" style="left:157.0px;top:295.2px;font-size:49px;color:#fff;-webkit-text-stroke:1.1px #0a3a8d">Śledzenie zasobów pracowników</div>
<svg class="a" style="left:889px;top:296px" width="46" height="44" viewBox="0 0 46 44">
<path d="M23 3 L28.3 16.2 L42.5 16.9 L31.5 25.8 L35.2 39.5 L23 31.8 L10.8 39.5 L14.5 25.8 L3.5 16.9 L17.7 16.2 Z" stroke="rgba(255,255,255,0.75)" stroke-width="2.2" fill="none" stroke-linejoin="round"/></svg>
<div class="a" style="left:2800px;top:284px;width:80px;height:80px;border:2px solid rgba(255,255,255,0.38);background:rgba(255,255,255,0.16);border-radius:8px"></div>
<svg class="a" style="left:2822px;top:306px" width="36" height="36" viewBox="0 0 36 36">
<g fill="#fff" transform="translate(18 18)">
<circle r="12"/>
<rect x="-3.5" y="-17" width="7" height="8" rx="1.5"/>
<rect x="-3.5" y="-17" width="7" height="8" rx="1.5" transform="rotate(60)"/>
<rect x="-3.5" y="-17" width="7" height="8" rx="1.5" transform="rotate(120)"/>
<rect x="-3.5" y="-17" width="7" height="8" rx="1.5" transform="rotate(180)"/>
<rect x="-3.5" y="-17" width="7" height="8" rx="1.5" transform="rotate(240)"/>
<rect x="-3.5" y="-17" width="7" height="8" rx="1.5" transform="rotate(300)"/>
</g><circle cx="18" cy="18" r="5.5" fill="#2f4a8f"/></svg>
<div class="a" style="left:2904px;top:284px;width:436px;height:80px;background:#3ec8f4;border-radius:9px"></div>
<svg class="a" style="left:2942px;top:309px" width="24" height="30" viewBox="0 0 24 30"><path d="M17 4 L7 15 L17 26" stroke="#fff" stroke-width="4.2" fill="none"/></svg>
<div class="t" style="left:2996.0px;top:312.7px;font-size:24px;font-weight:bold;color:#fff;">POWRÓT DO RAPORTÓW</div>

<div class="a" style="left:132px;top:398px;width:2616px;height:1960px;background:#fff;border-radius:22px 22px 0 0"></div>
<svg class="a" style="left:168px;top:442px" width="16" height="12" viewBox="0 0 16 12"><path d="M2 10 Q8 0 14 10z" fill="#b9b9b9"/></svg>
<div class="t" style="left:190.0px;top:434.2px;font-size:25.2px;color:#8c8c8c;">Ukryj wykres</div>
<div class="a" style="left:170px;top:459px;width:166px;height:2px;background:repeating-linear-gradient(90deg,#8c8c8c 0 6px,transparent 6px 10px)"></div>
<div class="a" style="left:168px;top:489px;width:2544px;height:1084px;border:2px solid #d5d9da;border-radius:9px"></div>
<svg class="a" style="left:0;top:0" width="3496" height="2324" viewBox="0 0 3496 2324"><line x1="299.0" y1="1187.0" x2="325.0" y2="1173.5" stroke="#d8d8d8" stroke-width="2"/><line x1="325.0" y1="1173.5" x2="1625.0" y2="1173.5" stroke="#cfcfcf" stroke-width="2"/><line x1="299.0" y1="1106.9" x2="325.0" y2="1093.4" stroke="#d8d8d8" stroke-width="2"/><line x1="325.0" y1="1093.4" x2="1625.0" y2="1093.4" stroke="#cfcfcf" stroke-width="2"/><line x1="299.0" y1="1026.8" x2="325.0" y2="1013.3" stroke="#d8d8d8" stroke-width="2"/><line x1="325.0" y1="1013.3" x2="1625.0" y2="1013.3" stroke="#cfcfcf" stroke-width="2"/><line x1="299.0" y1="946.7" x2="325.0" y2="933.2" stroke="#d8d8d8" stroke-width="2"/><line x1="325.0" y1="933.2" x2="1625.0" y2="933.2" stroke="#cfcfcf" stroke-width="2"/><line x1="299.0" y1="866.6" x2="325.0" y2="853.1" stroke="#d8d8d8" stroke-width="2"/><line x1="325.0" y1="853.1" x2="1625.0" y2="853.1" stroke="#cfcfcf" stroke-width="2"/><line x1="299.0" y1="786.5" x2="325.0" y2="773.0" stroke="#d8d8d8" stroke-width="2"/><line x1="325.0" y1="773.0" x2="1625.0" y2="773.0" stroke="#cfcfcf" stroke-width="2"/><line x1="299.0" y1="706.4000000000001" x2="325.0" y2="692.9000000000001" stroke="#d8d8d8" stroke-width="2"/><line x1="325.0" y1="692.9000000000001" x2="1625.0" y2="692.9000000000001" stroke="#cfcfcf" stroke-width="2"/><line x1="299.0" y1="626.3000000000001" x2="325.0" y2="612.8000000000001" stroke="#d8d8d8" stroke-width="2"/><line x1="325.0" y1="612.8000000000001" x2="1625.0" y2="612.8000000000001" stroke="#cfcfcf" stroke-width="2"/><line x1="299.0" y1="546.2" x2="325.0" y2="532.7" stroke="#d8d8d8" stroke-width="2"/><line x1="325.0" y1="532.7" x2="1625.0" y2="532.7" stroke="#cfcfcf" stroke-width="2"/><line x1="325.0" y1="532.7" x2="325.0" y2="1173.5" stroke="#cfcfcf" stroke-width="2"/><line x1="299.0" y1="1187.0" x2="325.0" y2="1173.5" stroke="#d8d8d8" stroke-width="2"/><line x1="541.67" y1="532.7" x2="541.67" y2="1173.5" stroke="#cfcfcf" stroke-width="2"/><line x1="515.67" y1="1187.0" x2="541.67" y2="1173.5" stroke="#d8d8d8" stroke-width="2"/><line x1="758.3399999999999" y1="532.7" x2="758.3399999999999" y2="1173.5" stroke="#cfcfcf" stroke-width="2"/><line x1="732.3399999999999" y1="1187.0" x2="758.3399999999999" y2="1173.5" stroke="#d8d8d8" stroke-width="2"/><line x1="975.01" y1="532.7" x2="975.01" y2="1173.5" stroke="#cfcfcf" stroke-width="2"/><line x1="949.01" y1="1187.0" x2="975.01" y2="1173.5" stroke="#d8d8d8" stroke-width="2"/><line x1="1191.6799999999998" y1="532.7" x2="1191.6799999999998" y2="1173.5" stroke="#cfcfcf" stroke-width="2"/><line x1="1165.6799999999998" y1="1187.0" x2="1191.6799999999998" y2="1173.5" stroke="#d8d8d8" stroke-width="2"/><line x1="1408.35" y1="532.7" x2="1408.35" y2="1173.5" stroke="#cfcfcf" stroke-width="2"/><line x1="1382.35" y1="1187.0" x2="1408.35" y2="1173.5" stroke="#d8d8d8" stroke-width="2"/><line x1="1625.02" y1="532.7" x2="1625.02" y2="1173.5" stroke="#cfcfcf" stroke-width="2"/><line x1="1599.02" y1="1187.0" x2="1625.02" y2="1173.5" stroke="#d8d8d8" stroke-width="2"/><path d="M404.0 706.4000000000001 L430.0 692.9000000000001 L430.0 1173.5 L404.0 1187.0z" fill="#5b81ad"/><path d="M320.0 706.4000000000001 L346.0 692.9000000000001 L430.0 692.9000000000001 L404.0 706.4000000000001z" fill="#78aee6"/><rect x="320.0" y="706.4000000000001" width="84" height="480.5999999999999" fill="#6a99ca"/><line x1="346.0" y1="693.9000000000001" x2="346.0" y2="1173.5" stroke="rgba(0,0,0,0.05)" stroke-width="2"/><line x1="346.0" y1="1173.5" x2="404.0" y2="1173.5" stroke="rgba(0,0,0,0.04)" stroke-width="2"/><path d="M496.0 702.19475 L522.0 688.69475 L522.0 1173.5 L496.0 1187.0z" fill="#a88057"/><path d="M412.0 702.19475 L438.0 688.69475 L522.0 688.69475 L496.0 702.19475z" fill="#e2ad76"/><rect x="412.0" y="702.19475" width="84" height="484.80525" fill="#c69a6a"/><line x1="438.0" y1="689.69475" x2="438.0" y2="1173.5" stroke="rgba(0,0,0,0.05)" stroke-width="2"/><line x1="438.0" y1="1173.5" x2="496.0" y2="1173.5" stroke="rgba(0,0,0,0.04)" stroke-width="2"/><path d="M620.67 618.29 L646.67 604.79 L646.67 1173.5 L620.67 1187.0z" fill="#5b81ad"/><path d="M536.67 618.29 L562.67 604.79 L646.67 604.79 L620.67 618.29z" fill="#78aee6"/><rect x="536.67" y="618.29" width="84" height="568.71" fill="#6a99ca"/><line x1="562.67" y1="605.79" x2="562.67" y2="1173.5" stroke="rgba(0,0,0,0.05)" stroke-width="2"/><line x1="562.67" y1="1173.5" x2="620.67" y2="1173.5" stroke="rgba(0,0,0,0.04)" stroke-width="2"/><path d="M712.67 797.5137500000001 L738.67 784.0137500000001 L738.67 1173.5 L712.67 1187.0z" fill="#a88057"/><path d="M628.67 797.5137500000001 L654.67 784.0137500000001 L738.67 784.0137500000001 L712.67 797.5137500000001z" fill="#e2ad76"/><rect x="628.67" y="797.5137500000001" width="84" height="389.4862499999999" fill="#c69a6a"/><line x1="654.67" y1="785.0137500000001" x2="654.67" y2="1173.5" stroke="rgba(0,0,0,0.05)" stroke-width="2"/><line x1="654.67" y1="1173.5" x2="712.67" y2="1173.5" stroke="rgba(0,0,0,0.04)" stroke-width="2"/><path d="M837.3399999999999 1026.8 L863.3399999999999 1013.3 L863.3399999999999 1173.5 L837.3399999999999 1187.0z" fill="#5b81ad"/><path d="M753.3399999999999 1026.8 L779.3399999999999 1013.3 L863.3399999999999 1013.3 L837.3399999999999 1026.8z" fill="#78aee6"/><rect x="753.3399999999999" y="1026.8" width="84" height="160.20000000000005" fill="#6a99ca"/><line x1="779.3399999999999" y1="1014.3" x2="779.3399999999999" y2="1173.5" stroke="rgba(0,0,0,0.05)" stroke-width="2"/><line x1="779.3399999999999" y1="1173.5" x2="837.3399999999999" y2="1173.5" stroke="rgba(0,0,0,0.04)" stroke-width="2"/><path d="M929.3399999999999 1082.7899 L955.3399999999999 1069.2899 L955.3399999999999 1173.5 L929.3399999999999 1187.0z" fill="#a88057"/><path d="M845.3399999999999 1082.7899 L871.3399999999999 1069.2899 L955.3399999999999 1069.2899 L929.3399999999999 1082.7899z" fill="#e2ad76"/><rect x="845.3399999999999" y="1082.7899" width="84" height="104.21010000000001" fill="#c69a6a"/><line x1="871.3399999999999" y1="1070.2899" x2="871.3399999999999" y2="1173.5" stroke="rgba(0,0,0,0.05)" stroke-width="2"/><line x1="871.3399999999999" y1="1173.5" x2="929.3399999999999" y2="1173.5" stroke="rgba(0,0,0,0.04)" stroke-width="2"/><path d="M1054.01 1090.88 L1080.01 1077.38 L1080.01 1173.5 L1054.01 1187.0z" fill="#5b81ad"/><path d="M970.01 1090.88 L996.01 1077.38 L1080.01 1077.38 L1054.01 1090.88z" fill="#78aee6"/><rect x="970.01" y="1090.88" width="84" height="96.11999999999989" fill="#6a99ca"/><line x1="996.01" y1="1078.38" x2="996.01" y2="1173.5" stroke="rgba(0,0,0,0.05)" stroke-width="2"/><line x1="996.01" y1="1173.5" x2="1054.01" y2="1173.5" stroke="rgba(0,0,0,0.04)" stroke-width="2"/><path d="M1146.01 1094.76485 L1172.01 1081.26485 L1172.01 1173.5 L1146.01 1187.0z" fill="#a88057"/><path d="M1062.01 1094.76485 L1088.01 1081.26485 L1172.01 1081.26485 L1146.01 1094.76485z" fill="#e2ad76"/><rect x="1062.01" y="1094.76485" width="84" height="92.23514999999998" fill="#c69a6a"/><line x1="1088.01" y1="1082.26485" x2="1088.01" y2="1173.5" stroke="rgba(0,0,0,0.05)" stroke-width="2"/><line x1="1088.01" y1="1173.5" x2="1146.01" y2="1173.5" stroke="rgba(0,0,0,0.04)" stroke-width="2"/><path d="M1270.6799999999998 1146.95 L1296.6799999999998 1133.45 L1296.6799999999998 1173.5 L1270.6799999999998 1187.0z" fill="#5b81ad"/><path d="M1186.6799999999998 1146.95 L1212.6799999999998 1133.45 L1296.6799999999998 1133.45 L1270.6799999999998 1146.95z" fill="#78aee6"/><rect x="1186.6799999999998" y="1146.95" width="84" height="40.049999999999955" fill="#6a99ca"/><line x1="1212.6799999999998" y1="1134.45" x2="1212.6799999999998" y2="1173.5" stroke="rgba(0,0,0,0.05)" stroke-width="2"/><line x1="1212.6799999999998" y1="1173.5" x2="1270.6799999999998" y2="1173.5" stroke="rgba(0,0,0,0.04)" stroke-width="2"/><path d="M1362.6799999999998 1144.34675 L1388.6799999999998 1130.84675 L1388.6799999999998 1173.5 L1362.6799999999998 1187.0z" fill="#a88057"/><path d="M1278.6799999999998 1144.34675 L1304.6799999999998 1130.84675 L1388.6799999999998 1130.84675 L1362.6799999999998 1144.34675z" fill="#e2ad76"/><rect x="1278.6799999999998" y="1144.34675" width="84" height="42.65325000000007" fill="#c69a6a"/><line x1="1304.6799999999998" y1="1131.84675" x2="1304.6799999999998" y2="1173.5" stroke="rgba(0,0,0,0.05)" stroke-width="2"/><line x1="1304.6799999999998" y1="1173.5" x2="1362.6799999999998" y2="1173.5" stroke="rgba(0,0,0,0.04)" stroke-width="2"/><path d="M1487.35 898.64 L1513.35 885.14 L1513.35 1173.5 L1487.35 1187.0z" fill="#5b81ad"/><path d="M1403.35 898.64 L1429.35 885.14 L1513.35 885.14 L1487.35 898.64z" fill="#78aee6"/><rect x="1403.35" y="898.64" width="84" height="288.36" fill="#6a99ca"/><line x1="1429.35" y1="886.14" x2="1429.35" y2="1173.5" stroke="rgba(0,0,0,0.05)" stroke-width="2"/><line x1="1429.35" y1="1173.5" x2="1487.35" y2="1173.5" stroke="rgba(0,0,0,0.04)" stroke-width="2"/><path d="M1579.35 1187.0 L1605.35 1173.5 L1605.35 1173.5 L1579.35 1187.0z" fill="#a88057"/><path d="M1495.35 1187.0 L1521.35 1173.5 L1605.35 1173.5 L1579.35 1187.0z" fill="#a88057"/><line x1="1599.0" y1="1187.0" x2="1625.0" y2="1173.5" stroke="#b0b0b0" stroke-width="2"/><line x1="299.0" y1="546.2" x2="299.0" y2="1188.0" stroke="#000" stroke-width="2.6"/><line x1="299.0" y1="1187.0" x2="1599.0" y2="1187.0" stroke="#000" stroke-width="2.6"/><line x1="287.0" y1="1187.0" x2="299.0" y2="1187.0" stroke="#000" stroke-width="2.6"/><text x="273" y="1195.0" text-anchor="end" font-size="22" fill="#000">0</text><line x1="287.0" y1="1106.9" x2="299.0" y2="1106.9" stroke="#000" stroke-width="2.6"/><text x="273" y="1114.9" text-anchor="end" font-size="22" fill="#000">20</text><line x1="287.0" y1="1026.8" x2="299.0" y2="1026.8" stroke="#000" stroke-width="2.6"/><text x="273" y="1034.8" text-anchor="end" font-size="22" fill="#000">40</text><line x1="287.0" y1="946.7" x2="299.0" y2="946.7" stroke="#000" stroke-width="2.6"/><text x="273" y="954.7" text-anchor="end" font-size="22" fill="#000">60</text><line x1="287.0" y1="866.6" x2="299.0" y2="866.6" stroke="#000" stroke-width="2.6"/><text x="273" y="874.6" text-anchor="end" font-size="22" fill="#000">80</text><line x1="287.0" y1="786.5" x2="299.0" y2="786.5" stroke="#000" stroke-width="2.6"/><text x="273" y="794.5" text-anchor="end" font-size="22" fill="#000">100</text><line x1="287.0" y1="706.4000000000001" x2="299.0" y2="706.4000000000001" stroke="#000" stroke-width="2.6"/><text x="273" y="714.4000000000001" text-anchor="end" font-size="22" fill="#000">120</text><line x1="287.0" y1="626.3000000000001" x2="299.0" y2="626.3000000000001" stroke="#000" stroke-width="2.6"/><text x="273" y="634.3000000000001" text-anchor="end" font-size="22" fill="#000">140</text><line x1="287.0" y1="546.2" x2="299.0" y2="546.2" stroke="#000" stroke-width="2.6"/><text x="273" y="554.2" text-anchor="end" font-size="22" fill="#000">160</text><line x1="407.335" y1="1187.0" x2="407.335" y2="1197.0" stroke="#000" stroke-width="2.2"/><text transform="translate(414.335 1213) rotate(-45)" text-anchor="end" font-size="22" fill="#000" textLength="265" lengthAdjust="spacingAndGlyphs">Krzysztof Wojciechowski</text><line x1="624.005" y1="1187.0" x2="624.005" y2="1197.0" stroke="#000" stroke-width="2.2"/><text transform="translate(631.005 1213) rotate(-45)" text-anchor="end" font-size="22" fill="#000" textLength="222" lengthAdjust="spacingAndGlyphs">Zuzanna Szymańska</text><line x1="840.675" y1="1187.0" x2="840.675" y2="1197.0" stroke="#000" stroke-width="2.2"/><text transform="translate(847.675 1213) rotate(-45)" text-anchor="end" font-size="22" fill="#000" textLength="208" lengthAdjust="spacingAndGlyphs">Krzysztof Krawczyk</text><line x1="1057.345" y1="1187.0" x2="1057.345" y2="1197.0" stroke="#000" stroke-width="2.2"/><text transform="translate(1064.345 1213) rotate(-45)" text-anchor="end" font-size="22" fill="#000" textLength="213" lengthAdjust="spacingAndGlyphs">Milena Kaźmierczak</text><line x1="1274.0149999999999" y1="1187.0" x2="1274.0149999999999" y2="1197.0" stroke="#000" stroke-width="2.2"/><text transform="translate(1281.0149999999999 1213) rotate(-45)" text-anchor="end" font-size="22" fill="#000" textLength="161" lengthAdjust="spacingAndGlyphs">Lidia Ciesielska</text><line x1="1490.685" y1="1187.0" x2="1490.685" y2="1197.0" stroke="#000" stroke-width="2.2"/><text transform="translate(1497.685 1213) rotate(-45)" text-anchor="end" font-size="22" fill="#000" textLength="179" lengthAdjust="spacingAndGlyphs">Marta Adamczyk</text></svg>
<div class="t" style="left:796.5px;top:1426.4px;font-size:27.9px;font-weight:bold;color:#000;">Osoba odpowiedzialna</div>
<div class="a" style="left:298px;top:1497px;width:34px;height:34px;background:#83a8d8;border:2px solid #5f8fcb"></div>
<div class="t" style="left:341.0px;top:1503.4px;font-size:24.3px;color:#000;">Planowane koszty pracy</div>
<div class="a" style="left:884px;top:1497px;width:34px;height:34px;background:#d9aa80;border:2px solid #c39262"></div>
<div class="t" style="left:927.0px;top:1503.9px;font-size:23.8px;color:#000;">Łącznie spędzony</div>

<div class="a" style="left:162px;top:1619px;width:2555px;height:63px;background:#f2f0d3;border-radius:10px 10px 0 0"></div>
<div class="a" style="left:1608px;top:1619px;width:695px;height:63px;background:#e6e0b6"></div>
<div class="a" style="left:162px;top:1619px;width:2555px;height:610px;border:2px solid #e4e4e4;border-top-color:#ecead0;border-radius:10px"></div>
<svg class="a" style="left:0;top:0" width="3496" height="2324" viewBox="0 0 3496 2324"><line x1="755.5" y1="1621" x2="755.5" y2="1682" stroke="#e9e6c6" stroke-width="2"/><line x1="755.5" y1="1682" x2="755.5" y2="2228" stroke="#e4e4e4" stroke-width="2"/><line x1="1087.5" y1="1621" x2="1087.5" y2="1682" stroke="#e9e6c6" stroke-width="2"/><line x1="1087.5" y1="1682" x2="1087.5" y2="2228" stroke="#e4e4e4" stroke-width="2"/><line x1="1607.5" y1="1621" x2="1607.5" y2="1682" stroke="#e9e6c6" stroke-width="2"/><line x1="1607.5" y1="1682" x2="1607.5" y2="2228" stroke="#e4e4e4" stroke-width="2"/><line x1="2303" y1="1621" x2="2303" y2="1682" stroke="#e9e6c6" stroke-width="2"/><line x1="2303" y1="1682" x2="2303" y2="2228" stroke="#e4e4e4" stroke-width="2"/><line x1="163" y1="1682" x2="2716" y2="1682" stroke="#e4e4e4" stroke-width="2"/><line x1="163" y1="1772" x2="2716" y2="1772" stroke="#e4e4e4" stroke-width="2"/><line x1="163" y1="1863" x2="2716" y2="1863" stroke="#e4e4e4" stroke-width="2"/><line x1="163" y1="1955" x2="2716" y2="1955" stroke="#e4e4e4" stroke-width="2"/><line x1="163" y1="2046" x2="2716" y2="2046" stroke="#e4e4e4" stroke-width="2"/><line x1="163" y1="2137" x2="2716" y2="2137" stroke="#e4e4e4" stroke-width="2"/></svg>
<div class="t" style="left:198.5px;top:1638.3px;font-size:25.1px;color:#5b5e4f;">Osoba odpowiedzialna</div>
<div class="t" style="left:791.5px;top:1638.3px;font-size:25.1px;color:#5b5e4f;">Liczba zadań</div>
<div class="t" style="left:1123.5px;top:1638.3px;font-size:25.1px;color:#5b5e4f;">Planowane koszty pracy</div>
<svg class="a" style="left:1620px;top:1644px" width="14" height="20" viewBox="0 0 14 20"><path d="M7 2 V16 M3 12 L7 17 L11 12" stroke="#8a8a70" stroke-width="2" fill="none"/></svg>
<div class="t" style="left:1643.0px;top:1638.3px;font-size:25.1px;color:#5b5e4f;">Spędzony na okresie raportowania</div>
<div class="t" style="left:2339.5px;top:1638.3px;font-size:25.1px;color:#5b5e4f;">Łącznie spędzony</div>
<div class="t" style="left:198.5px;top:1713.2px;font-size:29px;color:#2067b0;">Krzysztof Wojciechowski</div>
<div class="t" style="right:2443.0px;top:1713.6px;font-size:28.5px;color:#333;text-align:right;">1</div>
<div class="t" style="right:1925.0px;top:1713.6px;font-size:28.5px;color:#333;text-align:right;">120:00</div>
<div class="t" style="right:1228.5px;top:1713.6px;font-size:28.5px;color:#333;text-align:right;">121:03</div>
<div class="t" style="right:815.0px;top:1713.6px;font-size:28.5px;color:#333;text-align:right;">121:03</div>
<div class="t" style="left:198.5px;top:1804.5px;font-size:29px;color:#2067b0;">Zuzanna Szymańska</div>
<div class="t" style="right:2443.0px;top:1804.9px;font-size:28.5px;color:#333;text-align:right;">1</div>
<div class="t" style="right:1925.0px;top:1804.9px;font-size:28.5px;color:#333;text-align:right;">142:00</div>
<div class="t" style="right:1228.5px;top:1804.9px;font-size:28.5px;color:#333;text-align:right;">97:15</div>
<div class="t" style="right:815.0px;top:1804.9px;font-size:28.5px;color:#333;text-align:right;">97:15</div>
<div class="t" style="left:198.5px;top:1895.9px;font-size:29px;color:#2067b0;">Krzysztof Krawczyk</div>
<div class="t" style="right:2443.0px;top:1896.3px;font-size:28.5px;color:#333;text-align:right;">1</div>
<div class="t" style="right:1925.0px;top:1896.3px;font-size:28.5px;color:#333;text-align:right;">40:00</div>
<div class="t" style="right:1228.5px;top:1896.3px;font-size:28.5px;color:#333;text-align:right;">26:01</div>
<div class="t" style="right:815.0px;top:1896.3px;font-size:28.5px;color:#333;text-align:right;">26:01</div>
<div class="t" style="left:198.5px;top:1987.2px;font-size:29px;color:#2067b0;">Milena Kaźmierczak</div>
<div class="t" style="right:2443.0px;top:1987.6px;font-size:28.5px;color:#333;text-align:right;">1</div>
<div class="t" style="right:1925.0px;top:1987.6px;font-size:28.5px;color:#333;text-align:right;">24:00</div>
<div class="t" style="right:1228.5px;top:1987.6px;font-size:28.5px;color:#333;text-align:right;">23:02</div>
<div class="t" style="right:815.0px;top:1987.6px;font-size:28.5px;color:#333;text-align:right;">23:02</div>
<div class="t" style="left:198.5px;top:2078.6px;font-size:29px;color:#2067b0;">Lidia Ciesielska</div>
<div class="t" style="right:2443.0px;top:2079.0px;font-size:28.5px;color:#333;text-align:right;">2</div>
<div class="t" style="right:1925.0px;top:2079.0px;font-size:28.5px;color:#333;text-align:right;">10:00</div>
<div class="t" style="right:1228.5px;top:2079.0px;font-size:28.5px;color:#333;text-align:right;">9:52</div>
<div class="t" style="right:815.0px;top:2079.0px;font-size:28.5px;color:#333;text-align:right;">10:39</div>
<div class="t" style="left:198.5px;top:2169.9px;font-size:29px;color:#2067b0;">Marta Adamczyk</div>
<div class="t" style="right:2443.0px;top:2170.3px;font-size:28.5px;color:#333;text-align:right;">1</div>
<div class="t" style="right:1925.0px;top:2170.3px;font-size:28.5px;color:#333;text-align:right;">72:00</div>
<div class="t" style="right:1228.5px;top:2170.3px;font-size:28.5px;color:#333;text-align:right;">0:00</div>
<div class="t" style="right:815.0px;top:2170.3px;font-size:28.5px;color:#333;text-align:right;">0:00</div>

<div class="a" style="left:2780px;top:398px;width:560px;height:815px;background:#fff;border-radius:22px"></div>
<div class="a" style="left:2780px;top:1245px;width:560px;height:266px;background:#fff;border-radius:22px"></div>
<div class="t" style="left:2811.0px;top:424.9px;font-size:26.7px;font-weight:bold;color:#585858;">Filtr</div>
<div class="a" style="left:2810px;top:486px;width:500px;height:2px;background:#e8e8e8"></div>
<div class="a" style="left:2810px;top:553px;width:500px;height:2px;background:#e8e8e8"></div>
<div class="a" style="left:2810px;top:620px;width:500px;height:2px;background:#e8e8e8"></div>
<div class="a" style="left:2810px;top:687px;width:500px;height:2px;background:#e8e8e8"></div>
<svg class="a" style="left:2818px;top:506px" width="26" height="26" viewBox="0 0 26 26"><rect width="26" height="26" rx="4" fill="#0b6ef3"/><path d="M6 13.5 L11 18.5 L20 8" stroke="#fff" stroke-width="3.2" fill="none"/></svg>
<div class="t" style="left:2865.0px;top:505.4px;font-size:26.4px;color:#555;">Moje zadania</div>
<svg class="a" style="left:2818px;top:573px" width="26" height="26" viewBox="0 0 26 26"><rect width="26" height="26" rx="4" fill="#0b6ef3"/><path d="M6 13.5 L11 18.5 L20 8" stroke="#fff" stroke-width="3.2" fill="none"/></svg>
<div class="t" style="left:2865.0px;top:572.2px;font-size:26.4px;color:#555;">Zadania podwładnych</div>
<div class="a" style="left:2818px;top:640px;width:26px;height:26px;border:2px solid #777;border-radius:4px"></div>
<div class="t" style="left:2865.0px;top:639.2px;font-size:26.4px;color:#555;">Grupa zadań</div>
<div class="t" style="left:2811.0px;top:711.8px;font-size:26.6px;color:#555;">Raport za okres</div>
<div class="a" style="left:2810px;top:756px;width:449px;height:42px;border:2px solid #cdcdcd;border-radius:7px"></div>
<div class="t" style="left:2821.0px;top:764.3px;font-size:26.8px;color:#444;">Zakres dat</div>
<svg class="a" style="left:3233px;top:770px" width="20" height="14" viewBox="0 0 20 14"><path d="M2 3 L10 11 L18 3" stroke="#444" stroke-width="2.2" fill="none"/></svg>
<div class="a" style="left:2810px;top:811px;width:165px;height:51px;border:2px solid #c4c4c4;border-radius:7px"></div>
<div class="t" style="left:2821.0px;top:824.9px;font-size:26.7px;color:#444;">01.06.2024</div>
<svg class="a" style="left:2985px;top:817px" width="31" height="31" viewBox="0 0 31 31"><rect x="1" y="1" width="29" height="29" rx="2" fill="#f4f4f4" stroke="#c8c8c8" stroke-width="1.5"/><rect x="1" y="1" width="29" height="6" fill="#e0442c"/><text x="15.5" y="24" text-anchor="middle" font-size="16" font-weight="bold" fill="#1a4fa0">1</text><rect x="10" y="26" width="11" height="1.5" fill="#999"/></svg>
<div class="t" style="left:3034.0px;top:819.1px;font-size:20px;color:#555;">···</div>
<div class="a" style="left:3062px;top:811px;width:165px;height:51px;border:2px solid #c4c4c4;border-radius:7px"></div>
<div class="t" style="left:3072.0px;top:824.9px;font-size:26.7px;color:#444;">12.07.2024</div>
<svg class="a" style="left:3237px;top:817px" width="31" height="31" viewBox="0 0 31 31"><rect x="1" y="1" width="29" height="29" rx="2" fill="#f4f4f4" stroke="#c8c8c8" stroke-width="1.5"/><rect x="1" y="1" width="29" height="6" fill="#e0442c"/><text x="15.5" y="24" text-anchor="middle" font-size="16" font-weight="bold" fill="#1a4fa0">1</text><rect x="10" y="26" width="11" height="1.5" fill="#999"/></svg>
<div class="t" style="left:2811.0px;top:884.9px;font-size:27.6px;color:#555;">Projekt "jest równy"</div>
<div class="a" style="left:2811px;top:929px;width:451px;height:43px;border:2px solid #b9b9b9;border-radius:7px"></div>
<div class="t" style="left:2811.0px;top:994.9px;font-size:27.6px;color:#555;">Status "jest równy"</div>
<div class="a" style="left:2811px;top:1040px;width:449px;height:43px;border:2px solid #cdcdcd;border-radius:7px"></div>
<div class="t" style="left:2821.0px;top:1048.3px;font-size:26.8px;color:#444;">Ignoruj</div>
<svg class="a" style="left:3233px;top:1055px" width="20" height="14" viewBox="0 0 20 14"><path d="M2 3 L10 11 L18 3" stroke="#444" stroke-width="2.2" fill="none"/></svg>
<div class="a" style="left:2811px;top:1121px;width:188px;height:50px;border:2px solid #c9cccc;border-bottom-color:#a9aeb0;border-radius:6px;background:linear-gradient(#f6f7f7,#e1e5e6)"></div>
<div class="t" style="left:2849.0px;top:1135.6px;font-size:26.75px;font-weight:bold;color:#535c69;">Zastosuj</div>
<div class="t" style="left:3032.0px;top:1135.7px;font-size:26.6px;color:#2067b0;">Anuluj</div>
<div class="t" style="left:2811.0px;top:1272.0px;font-size:26.5px;font-weight:bold;color:#585858;">O raporcie</div>
<div class="a" style="left:2810px;top:1313px;width:500px;height:2px;background:#e8e8e8"></div>
<div class="t" style="left:2811.0px;top:1333.3px;font-size:26.8px;color:#3a3a3a;">Pokaż jak długo zajęło każdemu</div>
<div class="t" style="left:2811.0px;top:1371.0px;font-size:26.8px;color:#3a3a3a;">pracownikowi wykonanie aktywnego</div>
<div class="t" style="left:2811.0px;top:1408.7px;font-size:26.8px;color:#3a3a3a;">zadania śledzenia zasobów. Raport może</div>
<div class="t" style="left:2811.0px;top:1446.4px;font-size:26.8px;color:#3a3a3a;">być podzielony na projekty.</div>

<script>(function(){var w=window.innerWidth;if(w&&Math.abs(w-3496)>2){document.documentElement.style.zoom=w/3496;}})();</script>
</body></html>
